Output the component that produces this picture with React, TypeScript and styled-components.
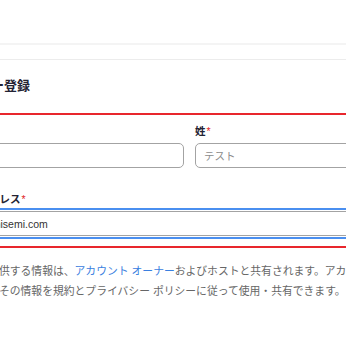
import React from 'react';
import styled, { createGlobalStyle } from 'styled-components';

const GlobalStyle = createGlobalStyle`
  html, body {
    margin: 0;
    padding: 0;
    background: #ffffff;
    overflow: hidden;
  }
  body {
    font-family: "Liberation Sans", "Noto Sans CJK JP", sans-serif;
    color: #232333;
  }
`;

const Page = styled.div`
  width: 640px;
  margin-left: -61px;
`;

const TopBar = styled.header`
  height: 43px;
  border-bottom: 2px solid #f4f4f4;
`;

const SubBar = styled.div`
  height: 14px;
  border-bottom: 1px solid #ececec;
`;

const Title = styled.h1`
  margin: 0;
  padding: 17px 0 18px;
  font-size: 13px;
  line-height: 18px;
  font-weight: 700;
  color: #232333;
`;

const Section = styled.section`
  width: 485px;
  border: 2px solid #e8262d;
  padding: 9px 10px 10px 6px;
`;

const Row = styled.div`
  display: grid;
  grid-template-columns: 1fr 1fr;
  column-gap: 11px;
`;

const Field = styled.div<{ spaced?: boolean }>`
  display: flex;
  flex-direction: column;
  gap: 5px;
  margin-top: ${p => (p.spaced ? '24px' : '0')};
`;

const Label = styled.label`
  font-size: 10.5px;
  line-height: 14px;
  font-weight: 700;
  color: #232333;
`;

const Required = styled.span`
  color: #e02828;
  margin-left: 1px;
  font-weight: 400;
`;

const Input = styled.input<{ focused?: boolean }>`
  box-sizing: border-box;
  width: 100%;
  height: 25px;
  border: 1px solid #a3a3a3;
  border-radius: 5px;
  padding: 0 8px;
  font-family: "Liberation Sans", "Noto Sans CJK JP", sans-serif;
  font-size: 10.5px;
  color: #333333;
  background: #ffffff;
  outline: ${p => (p.focused ? '2px solid #4a8ff0' : 'none')};
  outline-offset: 1px;
  &::placeholder {
    color: #8c8c8c;
  }
`;

const Notice = styled.p`
  width: 496px;
  margin: 13px 0 0 6px;
  font-family: "Liberation Sans", "Noto Sans CJK JP", sans-serif;
  font-size: 10.8px;
  line-height: 20px;
  color: #666666;
`;

const Link = styled.a`
  color: #3a80e0;
  text-decoration: none;
`;

export default function App() {
  return (
    <>
      <GlobalStyle />
      <Page>
        <TopBar />
        <SubBar />
        <Title>ウェビナー登録</Title>
        <Section>
          <Row>
            <Field>
              <Label>名<Required>*</Required></Label>
              <Input placeholder="テスト" />
            </Field>
            <Field>
              <Label>姓<Required>*</Required></Label>
              <Input placeholder="テスト" />
            </Field>
          </Row>
          <Field spaced>
            <Label>メールアドレス<Required>*</Required></Label>
            <Input focused defaultValue="test@kanisemi.com" />
          </Field>
        </Section>
        <Notice>
          登録時に提供する情報は、<Link href="#">アカウント オーナー</Link>およびホストと共有されます。アカウント オーナーとホストは、その情報を規約とプライバシー ポリシーに従って使用・共有できます。
        </Notice>
      </Page>
    </>
  );
}
